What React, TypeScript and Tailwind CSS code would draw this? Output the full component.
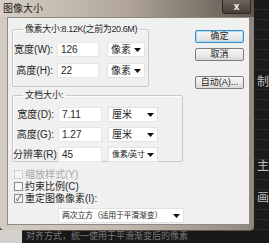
const font = "font-['Liberation_Sans','Noto_Sans_CJK_SC',sans-serif]";

const Caret = () => (
  <svg width="7" height="4" viewBox="0 0 7 4" className="shrink-0">
    <path d="M0 0h7L3.5 4z" fill="#111" />
  </svg>
);

const Select = ({ value, w, small }: { value: string; w: string; small?: boolean }) => (
  <div className={`${w} h-[15px] bg-white border border-[#e2e2e2] flex items-center pl-[3px] pr-[3px] overflow-hidden`}>
    <span className={`flex-1 whitespace-nowrap overflow-hidden ${small ? 'text-[8px] tracking-[-0.3px]' : ''}`}>{value}</span>
    <Caret />
  </div>
);

const Field = ({ value, w }: { value: string; w: string }) => (
  <div className={`${w} h-[15px] bg-white border border-[#e6e6e6] flex items-center pl-[3px]`}>{value}</div>
);

const Row = ({
  label,
  value,
  unit,
  lw,
  iw,
  sw,
  gap,
  small,
}: {
  label: string;
  value: string;
  unit: string;
  lw: string;
  iw: string;
  sw: string;
  gap: string;
  small?: boolean;
}) => (
  <div className="flex items-center h-[15px]">
    <span className={`${lw} text-right whitespace-nowrap`}>{label}</span>
    <div className="w-[4px]" />
    <Field value={value} w={iw} />
    <div className={gap} />
    <Select value={unit} w={sw} small={small} />
  </div>
);

const Check = ({ label, checked, disabled }: { label: string; checked?: boolean; disabled?: boolean }) => (
  <div className={`flex items-center gap-[2px] h-[11px] ${disabled ? 'text-[#a8a8a8]' : ''}`}>
    <div
      className={`w-[9px] h-[9px] border ${disabled ? 'border-[#d0d0d0] bg-[#f4f4f4]' : 'border-[#8a8a8a] bg-[#f7f7f7]'} flex items-center justify-center text-[8px] leading-none`}
    >
      {checked ? '✓' : ''}
    </div>
    <span>{label}</span>
  </div>
);

const Btn = ({ label, focus }: { label: string; focus?: boolean }) => (
  <div
    className={`h-[13px] w-[49px] rounded-[2px] border flex items-center justify-center text-[9px] leading-none bg-gradient-to-b from-[#f6f6f6] via-[#ebebeb] to-[#d9d9d9] ${
      focus ? 'border-[#3d8cc6] shadow-[inset_0_0_0_1px_#a9dcf5]' : 'border-[#7d7d7d]'
    }`}
  >
    {label}
  </div>
);

export default function App() {
  return (
    <div className={`w-[269px] h-[243px] bg-[#181818] overflow-hidden flex flex-col ${font} text-[10px] leading-[11px] text-[#262626]`}>
      <div className="flex h-[230px]">
        {/* dialog */}
        <div className="w-[255px] flex flex-col rounded-b-[4px] bg-gradient-to-r from-[#d3ccc3] via-[#c2b9ae] to-[#8f867d] shadow-[0_0_0_1px_#5b534c]">
          <div className="h-[17px] flex items-start bg-gradient-to-r from-[#d8d0c6] via-[#b0a598] to-[#5e554d]">
            <span className="pl-[3px] pt-[3px] text-[10px] text-[#1a1a1a]">图像大小</span>
            <div className="ml-auto mr-[3px] w-[29px] h-[14px] rounded-b-[3px] bg-gradient-to-b from-[#6d645c] to-[#463e38] border border-[#2f2925] border-t-0 flex items-center justify-center text-white text-[10px] font-bold">
              x
            </div>
          </div>
          <div className="flex-1 pl-[7px] pr-[4px] pb-[5px] flex">
            <div className="flex-1 bg-[#f0f0f0] border border-[#8f8983] flex">
              {/* left column */}
              <div className="w-[178px] flex flex-col pl-[4px] pt-[6px]">
                <fieldset className="w-[137px] h-[63px] border border-[#c9c9c9] rounded-[2px] shadow-[inset_1px_1px_0_#fff]">
                  <legend className="ml-[10px] px-[2px] text-[9px] leading-[11px] tracking-[-0.4px] whitespace-nowrap">像素大小:8.12K(之前为20.6M)</legend>
                  <div className="flex flex-col gap-[6px] pt-[7px]">
                    <Row label="宽度(W):" value="126" unit="像素" lw="w-[40px]" iw="w-[42px]" sw="w-[38px]" gap="w-[8px]" />
                    <Row label="高度(H):" value="22" unit="像素" lw="w-[40px]" iw="w-[42px]" sw="w-[38px]" gap="w-[8px]" />
                  </div>
                </fieldset>
                <fieldset className="mt-[3px] w-[171px] h-[72px] border border-[#c9c9c9] rounded-[2px] shadow-[inset_1px_1px_0_#fff]">
                  <legend className="ml-[10px] px-[2px] text-[9px] leading-[11px]">文档大小:</legend>
                  <div className="flex flex-col gap-[5px] pt-[6px]">
                    <Row label="宽度(D):" value="7.11" unit="厘米" lw="w-[41px]" iw="w-[44px]" sw="w-[50px]" gap="w-[6px]" />
                    <Row label="高度(G):" value="1.27" unit="厘米" lw="w-[41px]" iw="w-[44px]" sw="w-[50px]" gap="w-[6px]" />
                    <Row label="分辨率(R):" value="45" unit="像素/英寸" lw="w-[41px]" iw="w-[44px]" sw="w-[50px]" gap="w-[6px]" small />
                  </div>
                </fieldset>
                <div className="flex flex-col gap-[1px] mt-[7px] pl-[2px]">
                  <Check label="缩放样式(Y)" disabled />
                  <Check label="约束比例(C)" />
                  <Check label="重定图像像素(I):" checked />
                </div>
                <div className="mt-[4px] ml-[46px]">
                  <Select value="两次立方（适用于平滑渐变）" w="w-[126px]" small />
                </div>
              </div>
              {/* buttons */}
              <div className="flex flex-col pl-[9px] pt-[12px] gap-[5px]">
                <Btn label="确定" focus />
                <Btn label="取消" />
                <div className="h-[5px]" />
                <Btn label="自动(A)..." />
              </div>
            </div>
          </div>
        </div>
        {/* right background */}
        <div className="flex-1 flex flex-col pl-[3px] text-[12px] leading-[12px] text-[#bdbdbd] bg-[repeating-linear-gradient(to_bottom,#1a1a1a_0px,#1a1a1a_9px,#2b2b2b_9px,#2b2b2b_10px)]">
          <span className="mt-[76px]">制</span>
          <span className="mt-[72px]">主</span>
          <span className="mt-[20px]">画</span>
        </div>
      </div>
      <div className="flex-1 flex items-center">
        <div className="w-[22px] h-full bg-[#d4d0cb]" />
        <span className="pl-[4px] text-[9px] text-[#7a7a7a] whitespace-nowrap">对齐方式，统一使用于平滑渐变后的像素</span>
      </div>
    </div>
  );
}
